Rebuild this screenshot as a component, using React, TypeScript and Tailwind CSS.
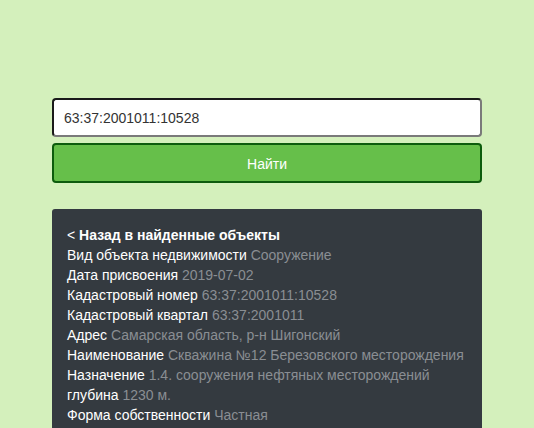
import React from "react";

const rows: [string, string][] = [
  ["Вид объекта недвижимости", "Сооружение"],
  ["Дата присвоения", "2019-07-02"],
  ["Кадастровый номер", "63:37:2001011:10528"],
  ["Кадастровый квартал", "63:37:2001011"],
  ["Адрес", "Самарская область, р-н Шигонский"],
  ["Наименование", "Скважина №12 Березовского месторождения"],
  ["Назначение", "1.4. сооружения нефтяных месторождений"],
  ["глубина", "1230 м."],
  ["Форма собственности", "Частная"],
];

export default function App() {
  return (
    <div className="h-[428px] overflow-hidden bg-[#d4f0bc] pt-[98px] font-['Liberation_Sans',Arial,sans-serif]">
      <div className="mx-auto w-[430px]">
        <input
          readOnly
          value="63:37:2001011:10528"
          className="block h-[39px] w-full rounded-[4px] border-2 border-t-[#1a1a1a] border-l-[#1a1a1a] border-b-[#7a7a7a] border-r-[#7a7a7a] bg-white px-[10px] pt-[1px] text-[14px] text-[#333] outline-none"
        />
        <button className="mt-[6px] block h-[40px] w-full rounded-[4px] border-2 border-[#0d5c0d] bg-[#66bf4a] pt-[2px] text-[14px] text-white">
          Найти
        </button>
        <div className="mt-[26px] h-[300px] rounded-[3px] bg-[#343a40] px-[15px] pt-[16px] text-[14px] leading-[20px]">
          <div className="text-white">
            &lt; <span className="font-bold">Назад в найденные объекты</span>
          </div>
          {rows.map(([k, v]) => (
            <div key={k}>
              <span className="text-white">{k}</span>{" "}
              <span className="text-[#8a8e93]">{v}</span>
            </div>
          ))}
        </div>
      </div>
    </div>
  );
}
